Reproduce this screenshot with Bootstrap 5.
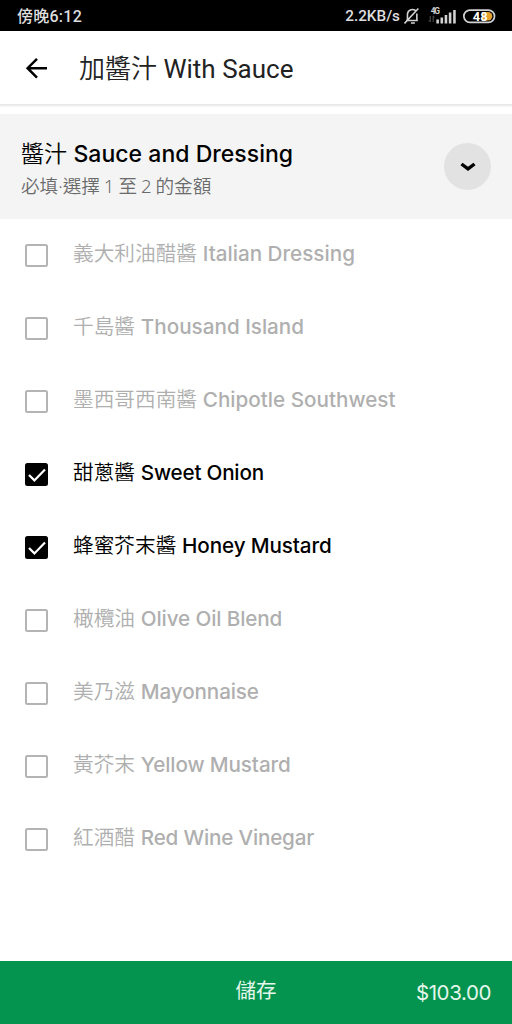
<!DOCTYPE html>
<html lang="zh-Hant">
<head>
<meta charset="utf-8">
<meta name="viewport" content="width=device-width, initial-scale=1">
<title>加醬汁 With Sauce</title>
<link rel="stylesheet" href="https://cdn.jsdelivr.net/npm/bootstrap@5.3.0/dist/css/bootstrap.min.css">
<style>
html, body { height: 100%; }
body { font-family: Inter, "Noto Sans CJK TC", sans-serif; font-weight: 350; color: #000; background: #fff; overflow: hidden; }
.status { height: 31px; background: #000; color: #dedede; font: 500 16px/31px Roboto, "Noto Sans CJK TC", sans-serif; padding: 1px 16px 0 17px; }
.clock { letter-spacing: .25px; }
.speed { font-size: 15.3px; }
.topbar { height: 73px; padding: 3px 25px 0; }
.topbar h1 { font: 400 26px/40px Roboto, "Noto Sans CJK TC", sans-serif; color: #222; margin-left: 30px; }
.han { font-weight: 350; }
.topbar svg { margin-top: -1px; }
.rule { height: 3px; background: linear-gradient(#e4e4e4, #fafafa); margin-bottom: 7px; }
.group { height: 105px; background: #f4f4f4; padding: 0 21px; }
.group h2 { font-size: 23px; line-height: 32px; margin-top: 6px; font-weight: 350; }
.group h2 .lat { letter-spacing: .03px; }
.group p { font: 350 18.6px/32px "Noto Sans", "Noto Sans CJK TC", sans-serif; color: #6b6b6b; word-spacing: -.9px; }
.toggle { width: 47px; height: 47px; background: #e2e2e2; }
.option { height: 73px; padding-left: 25px; font-size: 20.67px; line-height: 30px; color: #afafaf; cursor: pointer; }
.option.chosen { color: #000; }
.option .text { margin: -3px 0 0 25px; }
.lat { font-weight: 500; letter-spacing: 0; }
.snug { letter-spacing: -.2px; }
.mid { letter-spacing: -.12px; }
.tick { width: 23px; height: 23px; border: 2.5px solid #b4b4b4; border-radius: 2.5px; }
.chosen .tick { background: #000; border-color: #000; }
.save { height: 63px; background: #05944f; color: #e4f7ec; padding: 0 21px; font-size: 20.5px; font-weight: 400; }
.save-label { margin-top: -2px; }
.price { letter-spacing: -.4px; padding-top: 2px; }
</style>
</head>
<body class="d-flex flex-column">
<div class="status d-flex justify-content-between flex-shrink-0">
  <span class="clock">傍晚6:12</span>
  <div class="d-flex align-items-center">
    <span class="speed">2.2KB/s</span>
    <svg class="ms-1" width="92" height="24" viewBox="0 0 93 24" fill="none" stroke="#d2d2d2" stroke-width="1.6">
      <path d="M2 16.5h12M3.5 16V10a5 5 0 0 1 9-2.5M13 9.5V16M7 19h4M.5 19.5 14.5 4.5"/>
      <text x="27" y="10" font-size="8.5" font-weight="700" fill="#d2d2d2" stroke="none" textLength="9.5">4G</text>
      <path d="M26.5 12v6m-1.5-1.5 1.5 1.5M29.5 18v-6l1.5 1.5" stroke="#555" stroke-width="1"/>
      <path d="M34 15.5v4M38.2 13.5v6M42.4 11v8.500M46.6 8.500v11M51 6v13.500" stroke-width="2.6"/>
      <rect x="60.500" y="6" width="31" height="12.5" rx="6.2" stroke-width="1.7"/>
      <path d="M79 8h6a4.2 4.2 0 0 1 0 8.5H79z" fill="#e6a02c" stroke="none"/>
      <text x="69.5" y="16.900" font-size="13" font-weight="700" fill="#fff" stroke="none">48</text>
    </svg>
  </div>
</div>
<header class="topbar d-flex align-items-center flex-shrink-0">
  <svg width="24" height="24" viewBox="0 0 24 24" fill="none" stroke="#000" stroke-width="2.5"><path d="M22 11.2H3M12 1.8l-9.4 9.4L12 20.6"/></svg>
  <h1 class="mb-0"><span class="han">加醬汁</span> With Sauce</h1>
</header>
<div class="rule flex-shrink-0"></div>
<section class="group d-flex align-items-center justify-content-between flex-shrink-0">
  <div>
    <h2 class="mb-0">醬汁 <span class="lat">Sauce and Dressing</span></h2>
    <p class="mb-0">必填·選擇 1 至 2 的金額</p>
  </div>
  <div class="toggle rounded-circle d-flex align-items-center justify-content-center">
    <svg width="16" height="12" viewBox="0 0 16 12" fill="none" stroke="#000" stroke-width="3.4"><path d="M1.5 3 8 7.8 14.5 3"/></svg>
  </div>
</section>
<main class="flex-grow-1">
  <div class="option d-flex align-items-center"><span class="tick"></span><span class="text">義大利油醋醬 <span class="lat">Italian Dressing</span></span></div>
  <div class="option d-flex align-items-center"><span class="tick"></span><span class="text">千島醬 <span class="lat">Thousand Island</span></span></div>
  <div class="option d-flex align-items-center"><span class="tick"></span><span class="text">墨西哥西南醬 <span class="lat">Chipotle Southwest</span></span></div>
  <div class="option chosen d-flex align-items-center"><span class="tick d-flex align-items-center justify-content-center"><svg width="20" height="16" viewBox="0 0 20 16" fill="none" stroke="#fff" stroke-width="2.2" class="flex-shrink-0"><path d="m2 8 5.4 5.4L18 2.6"/></svg></span><span class="text">甜蔥醬 <span class="lat snug">Sweet Onion</span></span></div>
  <div class="option chosen d-flex align-items-center"><span class="tick d-flex align-items-center justify-content-center"><svg width="20" height="16" viewBox="0 0 20 16" fill="none" stroke="#fff" stroke-width="2.2" class="flex-shrink-0"><path d="m2 8 5.4 5.4L18 2.6"/></svg></span><span class="text">蜂蜜芥末醬 <span class="lat mid">Honey Mustard</span></span></div>
  <div class="option d-flex align-items-center"><span class="tick"></span><span class="text">橄欖油 <span class="lat mid">Olive Oil Blend</span></span></div>
  <div class="option d-flex align-items-center"><span class="tick"></span><span class="text">美乃滋 <span class="lat mid">Mayonnaise</span></span></div>
  <div class="option d-flex align-items-center"><span class="tick"></span><span class="text">黃芥末 <span class="lat mid">Yellow Mustard</span></span></div>
  <div class="option d-flex align-items-center"><span class="tick"></span><span class="text">紅酒醋 <span class="lat snug">Red Wine Vinegar</span></span></div>
</main>
<footer class="save d-flex align-items-center flex-shrink-0">
  <span class="col"></span>
  <span class="save-label">儲存</span>
  <span class="col text-end price">$103.00</span>
</footer>
<script src="https://cdn.jsdelivr.net/npm/bootstrap@5.3.0/dist/js/bootstrap.bundle.min.js"></script>
</body>
</html>
